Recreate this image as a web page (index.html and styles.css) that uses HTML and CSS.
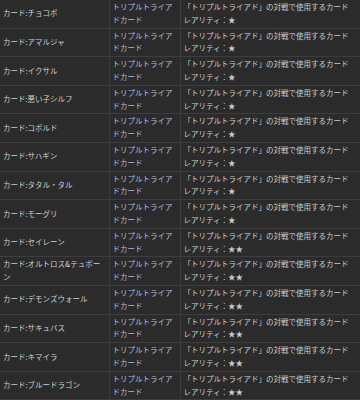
FILE: index.html
```html
<!DOCTYPE html>
<html lang="ja">
<head>
<meta charset="utf-8">
<link rel="stylesheet" href="styles.css">
</head>
<body>
<table class="items">
  <colgroup><col class="c-name"><col class="c-type"><col class="c-desc"></colgroup>
  <tbody>
    <tr><td class="name">カード:チョコボ</td><td class="type">トリプルトライアドカード</td><td class="desc">「トリプルトライアド」の対戦で使用するカード<br>レアリティ：★</td></tr>
    <tr><td class="name">カード:アマルジャ</td><td class="type">トリプルトライアドカード</td><td class="desc">「トリプルトライアド」の対戦で使用するカード<br>レアリティ：★</td></tr>
    <tr><td class="name">カード:イクサル</td><td class="type">トリプルトライアドカード</td><td class="desc">「トリプルトライアド」の対戦で使用するカード<br>レアリティ：★</td></tr>
    <tr><td class="name">カード:悪い子シルフ</td><td class="type">トリプルトライアドカード</td><td class="desc">「トリプルトライアド」の対戦で使用するカード<br>レアリティ：★</td></tr>
    <tr><td class="name">カード:コボルド</td><td class="type">トリプルトライアドカード</td><td class="desc">「トリプルトライアド」の対戦で使用するカード<br>レアリティ：★</td></tr>
    <tr><td class="name">カード:サハギン</td><td class="type">トリプルトライアドカード</td><td class="desc">「トリプルトライアド」の対戦で使用するカード<br>レアリティ：★</td></tr>
    <tr><td class="name">カード:タタル・タル</td><td class="type">トリプルトライアドカード</td><td class="desc">「トリプルトライアド」の対戦で使用するカード<br>レアリティ：★</td></tr>
    <tr><td class="name">カード:モーグリ</td><td class="type">トリプルトライアドカード</td><td class="desc">「トリプルトライアド」の対戦で使用するカード<br>レアリティ：★</td></tr>
    <tr><td class="name">カード:セイレーン</td><td class="type">トリプルトライアドカード</td><td class="desc">「トリプルトライアド」の対戦で使用するカード<br>レアリティ：★★</td></tr>
    <tr><td class="name">カード:オルトロス&amp;テュポーン</td><td class="type">トリプルトライアドカード</td><td class="desc">「トリプルトライアド」の対戦で使用するカード<br>レアリティ：★★</td></tr>
    <tr><td class="name">カード:デモンズウォール</td><td class="type">トリプルトライアドカード</td><td class="desc">「トリプルトライアド」の対戦で使用するカード<br>レアリティ：★★</td></tr>
    <tr><td class="name">カード:サキュバス</td><td class="type">トリプルトライアドカード</td><td class="desc">「トリプルトライアド」の対戦で使用するカード<br>レアリティ：★★</td></tr>
    <tr><td class="name">カード:キマイラ</td><td class="type">トリプルトライアドカード</td><td class="desc">「トリプルトライアド」の対戦で使用するカード<br>レアリティ：★★</td></tr>
    <tr><td class="name">カード:ブルードラゴン</td><td class="type">トリプルトライアドカード</td><td class="desc">「トリプルトライアド」の対戦で使用するカード<br>レアリティ：★★</td></tr>
  </tbody>
</table>
</body>
</html>
```

FILE: styles.css
```css
html, body {
  margin: 0;
  padding: 0;
  background: #2b2b2b;
}
body {
  font-family: "Noto Sans CJK JP", "Noto Sans", sans-serif;
  font-size: 7.5px;
  line-height: 12.8px;
  color: #cccccc;
}
.items {
  width: 360px;
  border-collapse: collapse;
  table-layout: fixed;
}
.c-name { width: 109px; }
.c-type { width: 71px; }
.items td {
  padding: 1px 3px;
  border: 1px solid #3d3d3d;
  border-top: none;
  vertical-align: middle;
  word-break: break-all;
}
.items td:first-child { border-left: none; }
.items td:last-child { border-right: none; }
.name { color: #cfcfcf; }
.type { color: #aebbd8; }
.desc { color: #cccccc; }
```
